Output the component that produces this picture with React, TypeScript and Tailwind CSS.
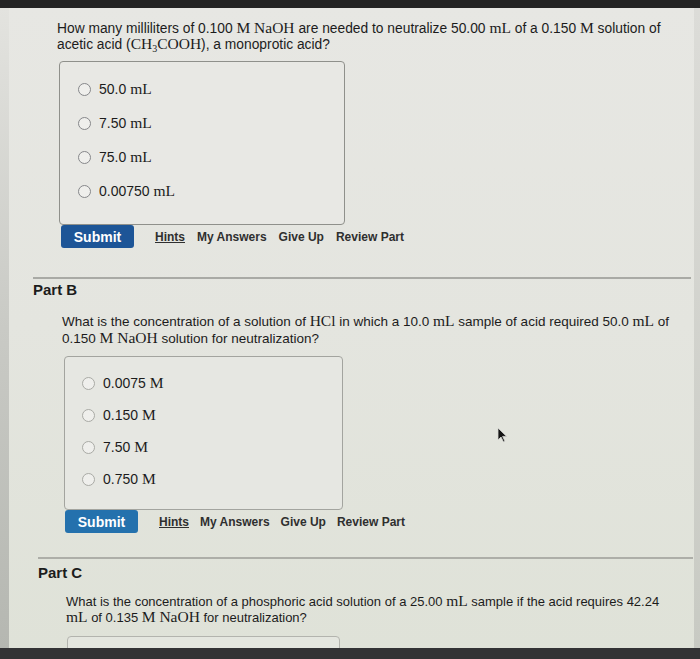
import type React from "react";

// chemistry bits are set in a serif face, like MathJax output
const M: React.FC<{ children: React.ReactNode }> = ({ children }) => (
	<span className="font-['Liberation_Serif',serif] text-[15.5px] leading-[0]">{children}</span>
);

const Radio: React.FC<{ light?: boolean }> = ({ light }) => (
	<span
		className={`inline-block w-[13px] h-[13px] rounded-full border-[1.5px] bg-[#efefec] ${
			light ? "border-[#a9aaa5]" : "border-[#86878a]"
		}`}
	/>
);

const Option: React.FC<{ light?: boolean; rowH: string; children: React.ReactNode }> = ({
	light,
	rowH,
	children,
}) => (
	<div className={`flex items-center gap-[8px] ${rowH}`}>
		<Radio light={light} />
		<span className="text-[14px] leading-[16px] text-[#1c1c1c]">{children}</span>
	</div>
);

const Actions: React.FC<{ blue: string; gap: string }> = ({ blue, gap }) => (
	<div className="flex items-center">
		<button
			className={`w-[73px] h-[23px] rounded-[3px] ${blue} text-white font-bold text-[14px] leading-none`}
		>
			Submit
		</button>
		<div className={`flex items-center ml-[21px] ${gap} text-[12px] font-bold text-[#2f2f2f]`}>
			<span className="underline">Hints</span>
			<span>My Answers</span>
			<span>Give Up</span>
			<span>Review Part</span>
		</div>
	</div>
);

export default function App() {
	return (
		<div className="relative w-[700px] h-[659px] overflow-hidden flex flex-col bg-[#2a2a2a] font-['Liberation_Sans',Arial,sans-serif] text-[#1c1c1c]">
			{/* top bezel */}
			<div className="h-[8px] shrink-0 bg-[#242424]" />

			<div className="flex flex-1 min-h-0">
				<div className="w-[9px] shrink-0 bg-gradient-to-b from-[#e3e3df] via-[#c9cac5] to-[#b5b7b1]" />
				<div className="flex-1 min-w-0 bg-gradient-to-b from-[#e7e7e3] via-[#e4e5df] to-[#dfe2d8]">
					{/* Part A */}
					<div className="pl-[48px]">
						<p className="pt-[13px] text-[13.8px] leading-[16px] whitespace-nowrap">
							How many milliliters of 0.100 <M>M NaOH</M> are needed to neutralize 50.00{" "}
							<M>mL</M> of a 0.150 <M>M</M> solution of
							<br />
							acetic acid (
							<M>
								CH<sub className="text-[10px]">3</sub>COOH
							</M>
							), a monoprotic acid?
						</p>
						<div className="mt-[8px] ml-[2px] w-[286px] h-[164px] rounded-[4px] border border-[#8f908b] bg-[#e8e8e4] pl-[18px] pt-[10px]">
							<Option rowH="h-[34px]">
								50.0 <M>mL</M>
							</Option>
							<Option rowH="h-[34px]">
								7.50 <M>mL</M>
							</Option>
							<Option rowH="h-[34px]">
								75.0 <M>mL</M>
							</Option>
							<Option rowH="h-[34px]">
								0.00750 <M>mL</M>
							</Option>
						</div>
						<div className="ml-[4px]">
							<Actions blue="bg-[#1d5597]" gap="gap-[12px]" />
						</div>
					</div>

					<div className="mt-[29px] ml-[24px] mr-[3px] h-[2px] bg-[#a9aaa5]" />

					{/* Part B */}
					<div className="pl-[24px]">
						<h2 className="mt-[2px] text-[15px] leading-[18px] font-bold">Part B</h2>
						<p className="mt-[14px] ml-[29px] text-[13.5px] leading-[17px] whitespace-nowrap">
							What is the concentration of a solution of <M>HCl</M> in which a 10.0 <M>mL</M>{" "}
							sample of acid required 50.0 <M>mL</M> of
							<br />
							0.150 <M>M NaOH</M> solution for neutralization?
						</p>
						<div className="mt-[9px] ml-[31px] w-[279px] h-[154px] rounded-[4px] border border-[#a3a49f] bg-[#e6e7e2] pl-[17px] pt-[10px]">
							<Option light rowH="h-[32px]">
								0.0075 <M>M</M>
							</Option>
							<Option light rowH="h-[32px]">
								0.150 <M>M</M>
							</Option>
							<Option light rowH="h-[32px]">
								7.50 <M>M</M>
							</Option>
							<Option light rowH="h-[32px]">
								0.750 <M>M</M>
							</Option>
						</div>
						<div className="ml-[32px]">
							<Actions blue="bg-[#2471ad]" gap="gap-[11px]" />
						</div>
					</div>

					<div className="mt-[24px] ml-[29px] mr-[1px] h-[2px] bg-[#adaea8]" />

					{/* Part C */}
					<div className="pl-[29px]">
						<h2 className="mt-[5px] text-[15px] leading-[18px] font-bold">Part C</h2>
						<p className="mt-[12px] ml-[28px] text-[13px] leading-[16px] whitespace-nowrap">
							What is the concentration of a phosphoric acid solution of a 25.00 <M>mL</M>{" "}
							sample if the acid requires 42.24
							<br />
							<M>mL</M> of 0.135 <M>M NaOH</M> for neutralization?
						</p>
						<div className="mt-[10px] ml-[29px] w-[273px] h-[30px] rounded-t-[4px] border border-[#b3b4ae] bg-[#e4e6df]" />
					</div>
				</div>
				<div className="w-[6px] shrink-0 bg-gradient-to-b from-[#dcdcd8] to-[#c8cac3]" />
			</div>

			{/* bottom bezel */}
			<div className="h-[11px] shrink-0 bg-[#333335]" />

			{/* mouse pointer */}
			<svg
				className="absolute left-[497px] top-[427px]"
				width="11"
				height="16"
				viewBox="0 0 11 16"
			>
				<path
					d="M1 1 L1 13 L4 10 L6.5 15 L8 14.3 L5.6 9.4 L9.6 9.4 Z"
					fill="#151515"
					stroke="#d8d8d4"
					strokeWidth="0.8"
					strokeLinejoin="round"
				/>
			</svg>
		</div>
	);
}
